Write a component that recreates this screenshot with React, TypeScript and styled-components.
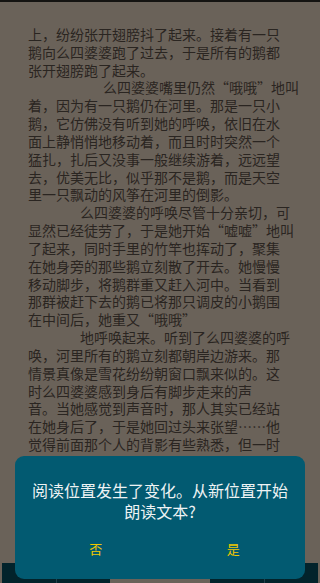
import React from "react";
import styled, { createGlobalStyle } from "styled-components";

const GlobalStyle = createGlobalStyle`
  html, body {
    margin: 0;
    padding: 0;
    background: #6a6259;
  }
  body {
    font-family: "Noto Sans CJK SC", "Noto Sans", sans-serif;
  }
`;

const Page = styled.div`
  position: relative;
  width: 320px;
  height: 583px;
  overflow: hidden;
  background: #6a6259;
  border-top: 2px solid #141311;
  box-sizing: border-box;
`;

const Reader = styled.div`
  padding: 24px 0 0 28px;
  color: #2a2521;
  font-size: 14px;
  line-height: 17.83px;
`;

const Line = styled.div<{ $indent?: number }>`
  white-space: nowrap;
  padding-left: ${(p) => p.$indent || 0}px;
`;

const Toolbar = styled.div`
  position: absolute;
  left: 2px;
  right: 2px;
  bottom: 0;
  height: 20px;
  display: flex;
  justify-content: space-between;
`;

const ToolGroup = styled.div`
  display: flex;
  width: 108px;
  background: #02232b;
`;

const ToolButton = styled.div`
  flex: 1;
  border-left: 1px solid #21404a;
  &:first-child {
    border-left: none;
  }
`;

const Dialog = styled.div`
  position: absolute;
  left: 15px;
  top: 454px;
  width: 290px;
  height: 123px;
  border-radius: 9px;
  background: #025a71;
  display: flex;
  flex-direction: column;
  align-items: center;
`;

const Message = styled.div`
  margin-top: 24px;
  color: #eef3f4;
  font-size: 16px;
  line-height: 20.5px;
  text-align: center;
`;

const Actions = styled.div`
  display: flex;
  box-sizing: border-box;
  width: 100%;
  padding: 0 3px 0 12px;
  margin-top: 19px;
`;

const Action = styled.button`
  flex: 1;
  background: none;
  border: none;
  padding: 0;
  color: #f0c800;
  font-family: inherit;
  font-size: 13px;
  line-height: 18px;
`;

const paragraphs: { indent: number; lines: string[] }[] = [
  {
    indent: 0,
    lines: [
      "上，纷纷张开翅膀抖了起来。接着有一只",
      "鹅向么四婆婆跑了过去，于是所有的鹅都",
      "张开翅膀跑了起来。",
    ],
  },
  {
    indent: 75,
    lines: [
      "么四婆婆嘴里仍然“哦哦”地叫",
      "着，因为有一只鹅仍在河里。那是一只小",
      "鹅，它仿佛没有听到她的呼唤，依旧在水",
      "面上静悄悄地移动着，而且时时突然一个",
      "猛扎，扎后又没事一般继续游着，远远望",
      "去，优美无比，似乎那不是鹅，而是天空",
      "里一只飘动的风筝在河里的倒影。",
    ],
  },
  {
    indent: 52,
    lines: [
      "么四婆婆的呼唤尽管十分亲切，可",
      "显然已经徒劳了，于是她开始“嘘嘘”地叫",
      "了起来，同时手里的竹竿也挥动了，聚集",
      "在她身旁的那些鹅立刻散了开去。她慢慢",
      "移动脚步，将鹅群重又赶入河中。当看到",
      "那群被赶下去的鹅已将那只调皮的小鹅围",
      "在中间后，她重又“哦哦”",
    ],
  },
  {
    indent: 52,
    lines: [
      "地呼唤起来。听到了么四婆婆的呼",
      "唤，河里所有的鹅立刻都朝岸边游来。那",
      "情景真像是雪花纷纷朝窗口飘来似的。这",
      "时么四婆婆感到身后有脚步走来的声",
      "音。当她感觉到声音时，那人其实已经站",
      "在她身后了，于是她回过头来张望……他",
      "觉得前面那个人的背影有些熟悉，但一时",
      "又想不起来是谁。",
    ],
  },
];

export default function App() {
  return (
    <>
      <GlobalStyle />
      <Page>
        <Reader>
          {paragraphs.map((para, pi) =>
            para.lines.map((text, li) => (
              <Line key={`${pi}-${li}`} $indent={li === 0 ? para.indent : 0}>
                {text}
              </Line>
            ))
          )}
        </Reader>
        <Toolbar>
          <ToolGroup>
            <ToolButton />
            <ToolButton />
          </ToolGroup>
          <ToolGroup>
            <ToolButton />
            <ToolButton />
          </ToolGroup>
        </Toolbar>
        <Dialog>
          <Message>
            阅读位置发生了变化。从新位置开始
            <br />
            朗读文本?
          </Message>
          <Actions>
            <Action>否</Action>
            <Action>是</Action>
          </Actions>
        </Dialog>
      </Page>
    </>
  );
}
